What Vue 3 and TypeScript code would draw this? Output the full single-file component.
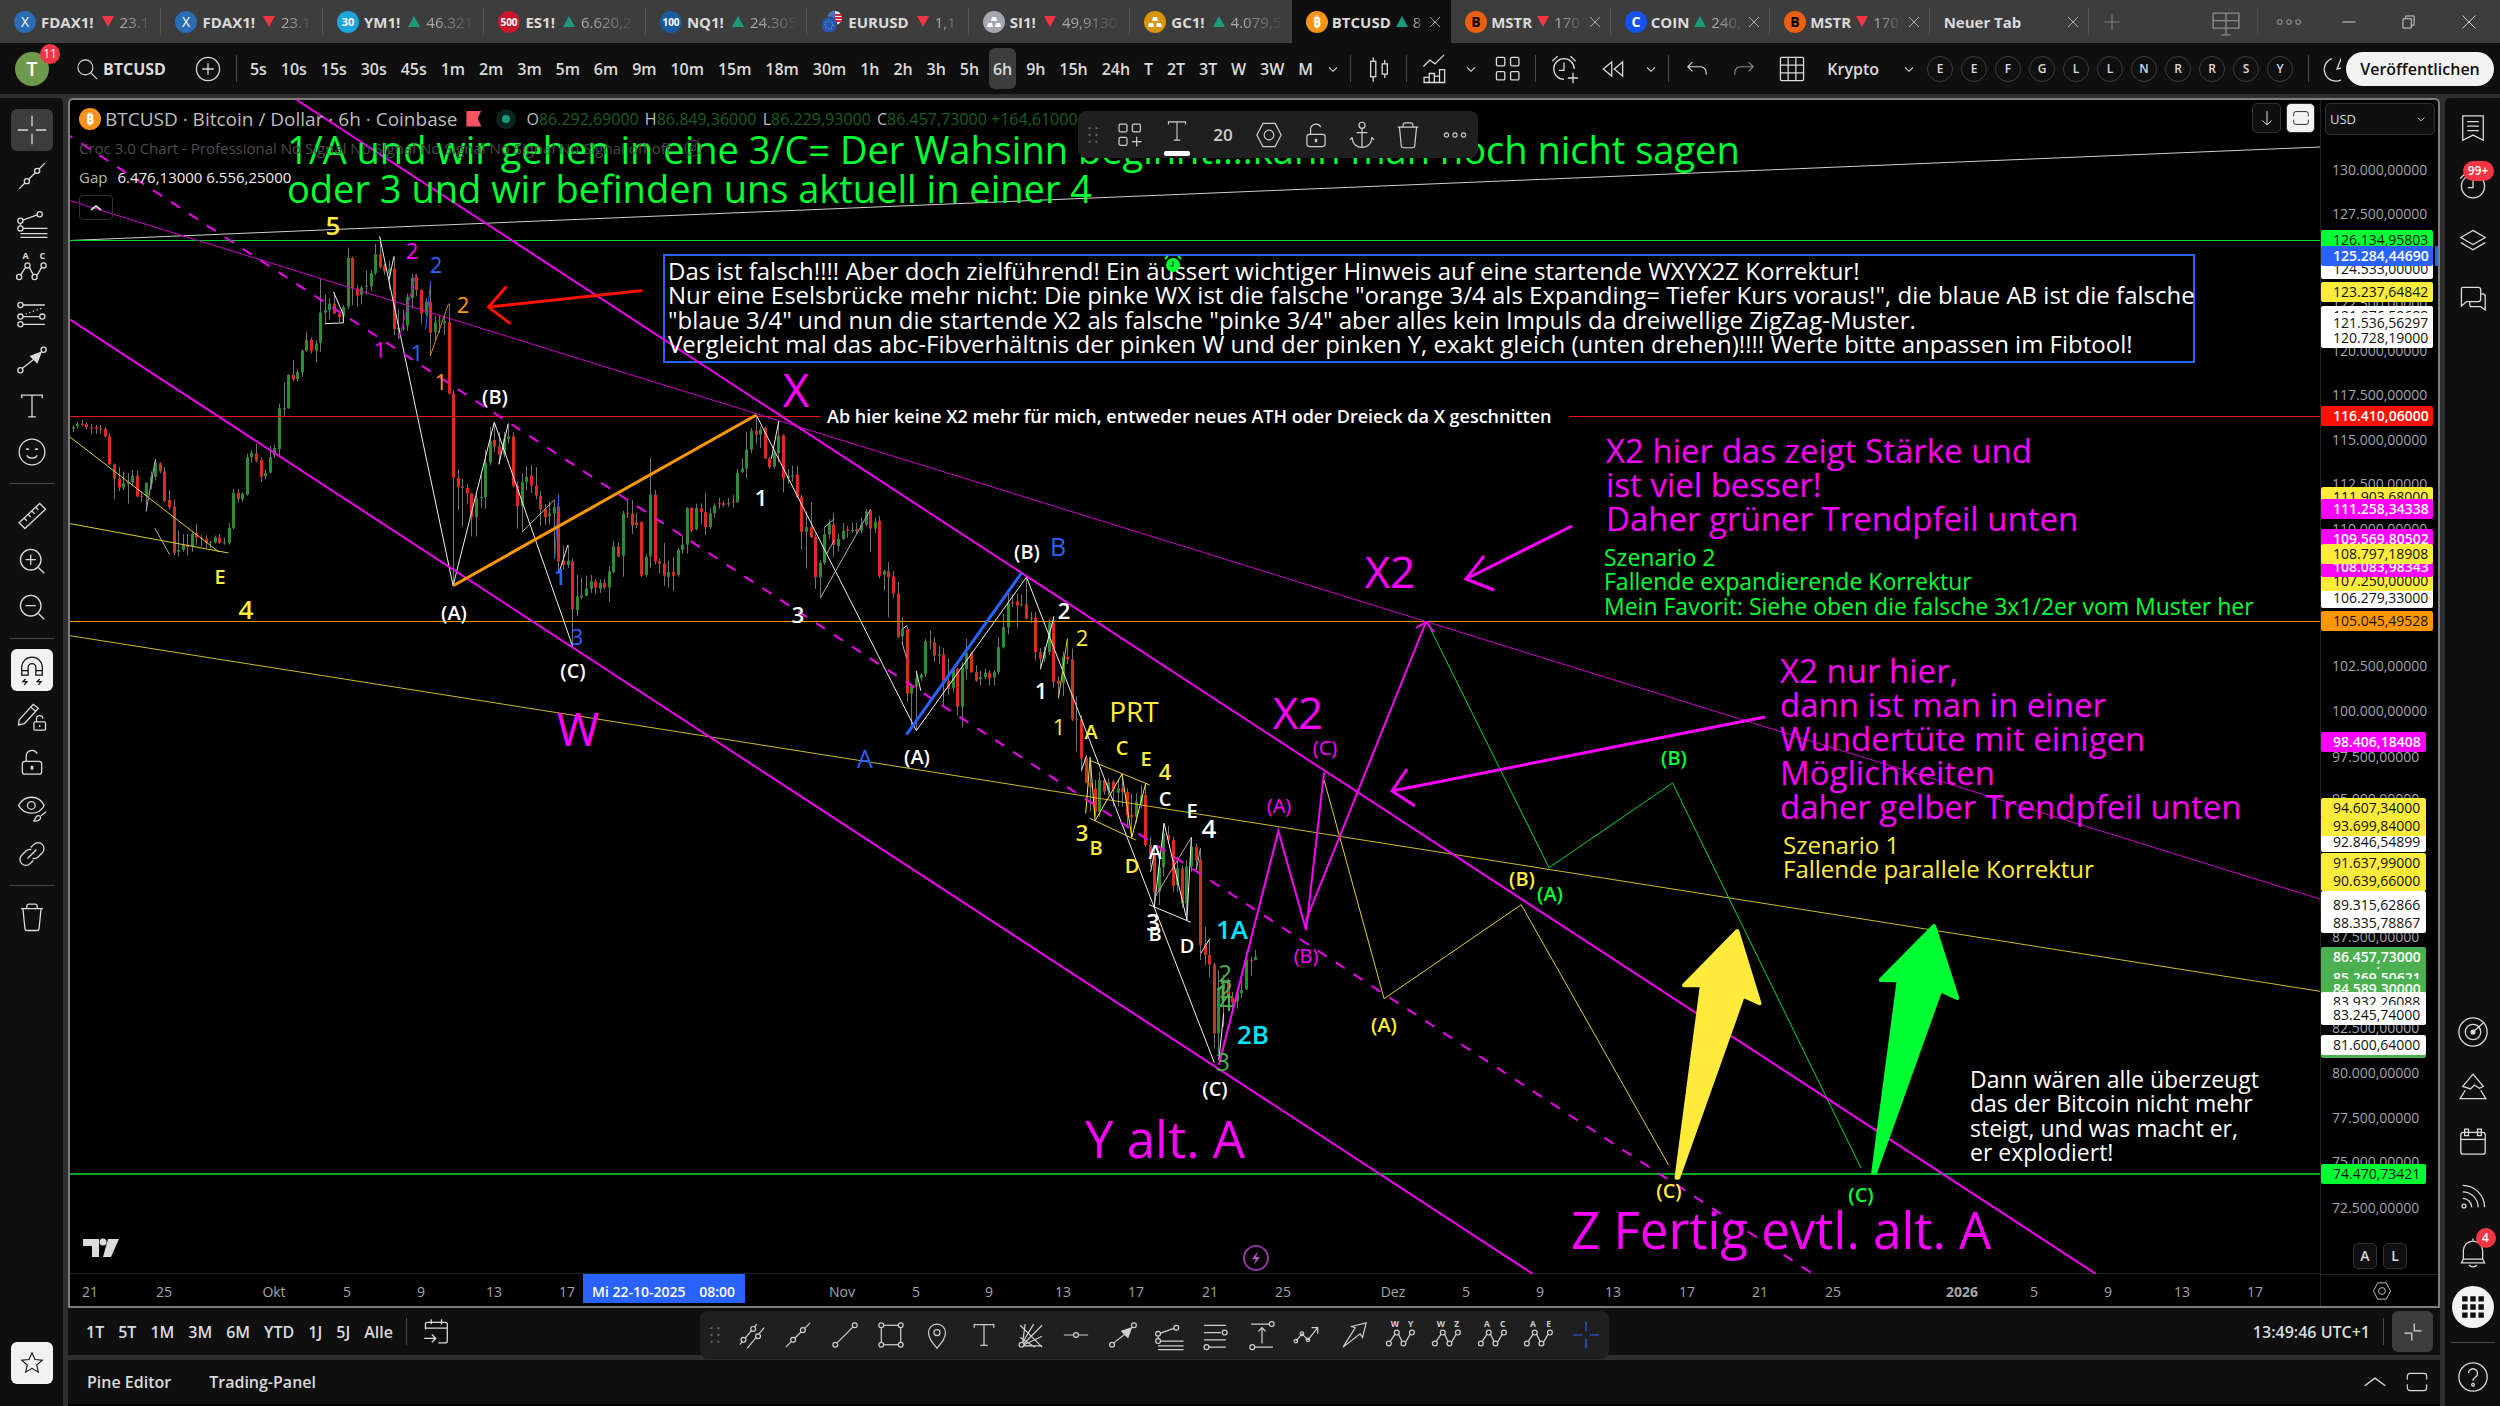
<script setup lang="ts">
import { h } from 'vue'

/* ---------- icon set, drawn on a 28-unit grid ---------- */
const lock = '<rect x="6.5" y="13.5" width="15" height="10" rx="2"/><path d="M9.500 13.500v-4a4.500 4.500 0 0 1 8.500-2"/><path d="M14 17v3" stroke-width="2"/>'
const wave = '<path d="M5 19.500l4-6M12 13.500l3 6M18 19.500l3.500-6"/><circle cx="4" cy="21" r="2"/><circle cx="10.500" cy="12" r="2"/><circle cx="16" cy="21" r="2"/><circle cx="23" cy="12" r="2"/>'
const letters = (a: string, b: string) =>
  `<g stroke="none" fill="currentColor" font-size="7" font-weight="700" text-anchor="middle" font-family="Open Sans, sans-serif"><text x="9" y="7">${a}</text><text x="22" y="7">${b}</text></g>`
const icons: Record<string, string> = {
  cross: '<path d="M14 3v8M14 17v8M3 14h8M17 14h8"/>',
  trend: '<path d="M4 24l4.500-4.500M11.500 16.500l5-5M19.500 8.500l4.500-4.500"/><circle cx="10" cy="18" r="2"/><circle cx="18" cy="10" r="2"/>',
  fib: '<circle cx="5" cy="13" r="2"/><circle cx="20" cy="8" r="2"/><circle cx="5" cy="19" r="2"/><path d="M7 12.500l11-4M5 15v2M7 19h19M5 23h21M5 26h21"/>',
  abc: wave + letters('A', 'C'),
  wy: wave + letters('W', 'Y'),
  wz: wave + letters('W', 'Z'),
  ae: wave + letters('A', 'E'),
  forecast: '<circle cx="5" cy="7" r="2"/><circle cx="5" cy="16" r="2"/><circle cx="22" cy="16" r="2"/><circle cx="5" cy="22" r="2"/><path d="M7 7h17M7 16h13M7 22h17"/><path d="M9 14l14-5" stroke-dasharray="1 2"/>',
  arrow: '<circle cx="5" cy="22" r="2"/><circle cx="23" cy="6" r="2"/><path d="M6.500 20.500L16 13"/><path d="M21 8l-8 3 5 5z" fill="currentColor"/>',
  text: '<path d="M6 8V5.500h16V8M14 5.500v17M11 22.500h6"/>',
  smile: '<circle cx="14" cy="14" r="10"/><path d="M10 16.500c1 3 7 3 8 0"/><path d="M10.500 11v1.500M17.500 11v1.500" stroke-width="2"/>',
  ruler: '<path d="M4 20L20 5l4.500 4.500L8.500 24.500zM8 16.500l2 2M11 13.500l2 2M14 11l2 2M17 8l2 2"/>',
  zin: '<circle cx="13" cy="13" r="8"/><path d="M9 13h8M13 9v8M19 19l4.500 4.500"/>',
  zout: '<circle cx="13" cy="13" r="8"/><path d="M9 13h8M19 19l4.500 4.500"/>',
  magnet: '<path d="M6 18v-6a8 8 0 0 1 16 0v6h-5v-6a3 3 0 0 0-6 0v6zM6 14.500h5M17 14.500h5M9 21l-2 2h3l-2 2.500M20 21l-2 2h3l-2 2.500"/>',
  penlock: '<path d="M4 17L15 5l4 3L8 20l-4.500 1zM13 7l4 3.500"/><rect x="15.500" y="18.500" width="9" height="6.500" rx="1"/><path d="M17.500 18.500v-2a2.500 2.500 0 0 1 5-.5M20 21v1.500"/>',
  lock,
  eye: '<path d="M3.500 12c4.500-8.500 16-8.500 20 0-4 8-15.500 8-20 0z"/><circle cx="13.500" cy="12" r="3"/><path d="M15 24c2 0 1-4 4-4 2 0 2 2 1 3s-3 1.500-5 1zM21 20l4-3"/>',
  hidden: '<circle cx="14" cy="14" r="8"/><circle cx="14" cy="14" r="3"/><path d="M7 24L21 4"/>',
  link: '<path d="M13 9l2.500-2.500a4.500 4.500 0 0 1 6.500 6.500L18.500 16.500a4.500 4.500 0 0 1-4 1M15 19l-2.500 2.500A4.500 4.500 0 0 1 6 15L9.500 11.500a4.500 4.500 0 0 1 4-1M10.500 17.500l7-7"/>',
  trash: '<path d="M5.500 7.500h17M10 7V5.500a1.500 1.500 0 0 1 1.500-1.500h5A1.500 1.500 0 0 1 18 5.500V7M7 8l1.500 15a1.500 1.500 0 0 0 1.500 1.500h8a1.500 1.500 0 0 0 1.500-1.500L21 8"/>',
  star: '<path d="M14 4.500l2.800 6.300 6.800.6-5.200 4.500 1.600 6.700-6-3.600-6 3.600 1.600-6.700-5.200-4.500 6.800-.6z"/>',
  search: '<circle cx="12.500" cy="12.500" r="7"/><path d="M17.500 17.500l6 6"/>',
  plus: '<circle cx="14" cy="14" r="9"/><path d="M14 9.500v9M9.500 14h9"/>',
  chev: '<path d="M10.500 12.500l3.500 3.500 3.500-3.500"/>',
  up: '<path d="M6 17l8-6 8 6"/>',
  candles: '<path d="M9.500 5v3M9.500 20v4M18.500 7v3M18.500 18v3"/><rect x="7.500" y="8" width="4" height="12"/><rect x="16.500" y="10" width="4" height="8"/>',
  indic: '<path d="M5 12l5-5 4 3 7-7M5.500 24.500v-4h4v4zM9.500 24.500v-7h4v7zM13.500 24.500v-5h4v5zM17.500 24.500v-10h4v10z"/>',
  tiles: '<rect x="5" y="5" width="6.500" height="6.500" rx="1"/><rect x="16" y="5" width="6.500" height="6.500" rx="1"/><rect x="5" y="16" width="6.500" height="6.500" rx="1"/><rect x="16" y="16" width="6.500" height="6.500" rx="1"/>',
  tilesadd: '<rect x="5" y="5" width="6.500" height="6.500" rx="1"/><rect x="16" y="5" width="6.500" height="6.500" rx="1"/><rect x="5" y="16" width="6.500" height="6.500" rx="1"/><path d="M19.500 15.500v8M15.500 19.500h8"/>',
  alarm: '<path d="M14 22a8 8 0 1 1 8-8M14 9v6h-4M5 8l4-4M19 4l4 4M21 17v8M17 21h8"/>',
  rewind: '<path d="M13 8.500L6.500 14l6.500 5.500zM21.500 8.500L15 14l6.500 5.500z"/>',
  undo: '<path d="M10 8l-4 4 4 4M6.500 12H17a5 5 0 0 1 5 5v2"/>',
  redo: '<path d="M18 8l4 4-4 4M21.500 12H11a5 5 0 0 0-5 5v2"/>',
  table: '<rect x="5" y="5" width="18" height="18" rx="1"/><path d="M11 5v18M17 5v18M5 11h18M5 17h18"/>',
  gauge: '<path d="M10 6a9 9 0 1 0 8 16M18 4v9l-4 1z"/>',
  monitor: '<path d="M4.500 7.500h19v11h-19zM14 7.500v16M10.500 23.500h7M4.500 13h19"/>',
  more: '<circle cx="6" cy="14" r="2"/><circle cx="14" cy="14" r="2"/><circle cx="22" cy="14" r="2"/>',
  close: '<path d="M7 7l14 14M21 7L7 21"/>',
  minus: '<path d="M7 14h14"/>',
  restore: '<path d="M7.500 10.500h9v10h-9zM10.500 10V7.500h9v10H17"/>',
  add: '<path d="M14 5v18M5 14h18"/>',
  hexa: '<path d="M9 4.500h10l5 9.500-5 9.500H9L4 14z"/><circle cx="14" cy="14" r="4"/>',
  anchor: '<circle cx="14" cy="6" r="2.500"/><path d="M14 8.500V24M9.500 12h9M6 16c0 11 16 11 16 0M6 16l-2 2M22 16l2 2"/>',
  drag: '<g fill="currentColor" stroke="none"><circle cx="11" cy="8" r="1"/><circle cx="17" cy="8" r="1"/><circle cx="11" cy="14" r="1"/><circle cx="17" cy="14" r="1"/><circle cx="11" cy="20" r="1"/><circle cx="17" cy="20" r="1"/></g>',
  down: '<path d="M14 7v14M9.500 16.500L14 21l4.500-4.500"/>',
  fit: '<path d="M5.500 12v-3A2.500 2.500 0 0 1 8 6.500h12A2.500 2.500 0 0 1 22.500 9v3M5.500 16v3A2.500 2.500 0 0 0 8 21.500h12a2.500 2.500 0 0 0 2.500-2.500v-3"/>',
  book: '<path d="M6 4.500h16v19l-8-4-8 4zM9.500 9h9M9.500 12.500h9M9.500 16h9"/>',
  clock: '<circle cx="14" cy="15" r="9"/><path d="M14 10v6h-4M4 9l4-4"/>',
  layers: '<path d="M14 5l9.500 5.500L14 16l-9.500-5.500zM4.500 14.500L14 20l9.500-5.500"/>',
  chat: '<path d="M6 5h12a2 2 0 0 1 2 2v7a2 2 0 0 1-2 2H9l-4 3.500V6a1 1 0 0 1 1-1zM20 10h1.500a2 2 0 0 1 2 2v10.500L20 20h-7a1.500 1.500 0 0 1-1.500-1.500V16"/>',
  radar: '<circle cx="14" cy="14" r="11"/><circle cx="14" cy="14" r="6"/><circle cx="14" cy="14" r="1.500" fill="currentColor"/><path d="M15 13l7-6"/>',
  idea: '<path d="M14 4l8 9.500-3 1.500-4-2.500-3 3-6-2zM8 16.500L4 23h20l-4-6.500"/>',
  cal: '<rect x="4.500" y="6.500" width="19" height="17" rx="2"/><path d="M4.500 12h19"/><rect x="7.500" y="4" width="3" height="5"/><rect x="17.500" y="4" width="3" height="5"/>',
  feed: '<circle cx="7" cy="21" r="1.500"/><path d="M6 15a7 7 0 0 1 7 7M6 10a12 12 0 0 1 12 12M6 5a17 17 0 0 1 17 17"/>',
  bell: '<path d="M6.500 20V13a7.500 7.500 0 0 1 15 0v7M5 22.500h18l-1.500-3h-15zM11 24c1 2 5 2 6 0M14 5V3.500"/>',
  dots9: '<g fill="currentColor" stroke="none"><path d="M6 6h4v4H6zM12 6h4v4h-4zM18 6h4v4h-4zM6 12h4v4H6zM12 12h4v4h-4zM18 12h4v4h-4zM6 18h4v4H6zM12 18h4v4h-4zM18 18h4v4h-4z"/></g>',
  help: '<circle cx="14" cy="14" r="11"/><path d="M10.500 11a3.500 3.500 0 1 1 5.500 3c-1.500 1-2 1.500-2 3"/><circle cx="14" cy="20" r="1"/>',
  goto: '<path d="M5 12V8a1.500 1.500 0 0 1 1.500-1.500h14A1.500 1.500 0 0 1 22 8v13a1.500 1.500 0 0 1-1.500 1.500H15M5 11h17M9.500 4v4M17.500 4v4M4 19h9M10 16l3 3-3 3"/>',
  chan: '<path d="M4 22L18 5M10 25L24 8"/><circle cx="7" cy="18" r="2" fill="#1f1f1f"/><circle cx="15" cy="9" r="2" fill="#1f1f1f"/><circle cx="19" cy="15" r="2" fill="#1f1f1f"/>',
  seg: '<circle cx="6" cy="22" r="2"/><circle cx="22" cy="6" r="2"/><path d="M7.500 20.500l13-13"/>',
  rect: '<rect x="6" y="6" width="16" height="16"/><g fill="#1f1f1f"><circle cx="6" cy="6" r="2"/><circle cx="22" cy="6" r="2"/><circle cx="6" cy="22" r="2"/><circle cx="22" cy="22" r="2"/></g>',
  pin: '<path d="M14 25c-4-5-7-8.500-7-13a7 7 0 0 1 14 0c0 4.500-3 8-7 13z"/><circle cx="14" cy="12" r="2.500"/>',
  gann: '<circle cx="7" cy="22" r="2"/><path d="M8 20L10 5M8 20L17 5M9 21L24 6M9 22l15-7M9 23h15M6 6l18 18M6 16l12 8"/>',
  hline: '<path d="M4 14h7.500M16.500 14H24"/><circle cx="14" cy="14" r="2"/>',
  levels: '<path d="M5 6h18M5 12h14M5 18h18M9 24h14"/><circle cx="22" cy="12" r="2"/><circle cx="7" cy="24" r="2"/>',
  range: '<path d="M5 5h15M8 24h15M14 21V8M11 11l3-3 3 3"/><circle cx="22" cy="5" r="2"/><circle cx="6" cy="24" r="2"/>',
  path: '<path d="M4 19l5-6 5 5 8-10M17 8h5v5"/><circle cx="4" cy="19" r="1.500"/><circle cx="9" cy="13" r="1.500"/><circle cx="14" cy="18" r="1.500"/>',
  bigarrow: '<path d="M5 24L15 8l-3-1 12-3-3 12-2-3z"/>',
  shrink: '<path d="M15 7v6h6M13 21v-6H7"/>',
}
const Icon = (p: { n: string; s?: number }) =>
  h('svg', {
    class: 'ic', viewBox: '0 0 28 28', width: p.s ?? 36, height: p.s ?? 36,
    fill: 'none', stroke: 'currentColor', 'aria-hidden': 'true', innerHTML: icons[p.n],
  })

/* ---------- window tabs ---------- */
interface Tab { t: string; d: 1 | -1 | 0; v: string; c: string; g: string; x?: boolean; on?: boolean; gc?: string }
const tabs: Tab[] = [
  { t: 'FDAX1!', d: -1, v: '23.1', c: '#2b6cb5', g: 'X' },
  { t: 'FDAX1!', d: -1, v: '23.1', c: '#2b6cb5', g: 'X' },
  { t: 'YM1!', d: 1, v: '46.321', c: '#1ea4dd', g: '30' },
  { t: 'ES1!', d: 1, v: '6.620,2', c: '#c9162b', g: '500' },
  { t: 'NQ1!', d: 1, v: '24.305', c: '#1a5a9e', g: '100' },
  { t: 'EURUSD', d: -1, v: '1,1', c: '', g: 'fx' },
  { t: 'SI1!', d: -1, v: '49,9130', c: '#a6a8b1', g: 'bars' },
  { t: 'GC1!', d: 1, v: '4.079,5', c: '#d8950e', g: 'bars' },
  { t: 'BTCUSD', d: 1, v: '8', c: '#f7931a', g: '₿', x: true, on: true },
  { t: 'MSTR', d: -1, v: '170', c: '#eb5f12', g: 'B', gc: '#000', x: true },
  { t: 'COIN', d: 1, v: '240,', c: '#1652f0', g: 'C', x: true },
  { t: 'MSTR', d: -1, v: '170', c: '#eb5f12', g: 'B', gc: '#000', x: true },
  { t: 'Neuer Tab', d: 0, v: '', c: '', g: '', x: true },
]

const intervals = '5s 10s 15s 30s 45s 1m 2m 3m 5m 6m 9m 10m 15m 18m 30m 1h 2h 3h 5h 6h 9h 15h 24h T 2T 3T W 3W M'.split(' ')
const watch = 'EEFGLLNRRSY'.split('')
const leftTools = [
  ['cross', 'trend', 'fib', 'abc', 'forecast', 'arrow', 'text', 'smile'],
  ['ruler', 'zin', 'zout'],
  ['magnet', 'penlock', 'lock', 'eye', 'link'],
  ['trash'],
]
const ranges = '1T 5T 1M 3M 6M YTD 1J 5J Alle'.split(' ')
const drawTools = ['chan', 'trend', 'seg', 'rect', 'pin', 'text', 'gann', 'hline', 'arrow', 'fib', 'levels', 'range', 'path', 'bigarrow', 'wy', 'wz', 'abc', 'ae', 'cross']

/* ---------- bars: open, close, high, low; measured downwards inside each block ---------- */
const blocks: { top: number; k: number; bars: string }[] = [
  { top: 200, k: 2.8, bars: '640 636 630 650|633 627 622 640|626 630 616 632|628 637 622 642|637 640 628 654|636 640 630 655|640 641 630 655|641 662 635 665|662 740 653 742|740 780 738 838|780 805 748 815|805 793 760 812|795 790 765 850|790 772 756 800|772 830 758 832|828 830 815 845|828 792 790 872|795 775 760 810|775 735 728 785|737 760 735 765|760 842 748 847|840 860 812 866|858 988 838 995|985 980 925 998|980 965 935 985|965 972 935 995|970 935 930 985|932 945 907 965|945 946 938 970|948 960 940 975|960 958 955 975|958 945 940 962|945 960 935 962|960 958 945 965|960 918 905 965|918 820 808 922|820 837 810 847|838 822 818 845|825 720 710 828|720 708 700 735|710 730 682 735|728 775 720 790|773 765 755 782|763 720 688 765|715 695 685 722|697 583 570 720|585 583 510 605|583 490 488 585|490 502 448 507|502 482 475 508|482 422 418 495|422 392 368 425|392 422 385 430|422 402 392 455|400 315 220 425|315 308 265 348|308 290 275 335|290 318 258 320|318 328 310 342|325 300 295 345|298 162 133 305|162 248 158 295|248 268 238 300|265 245 240 292|243 240 198 265|242 205 195 255|205 152 122 210|152 188 105 192|185 200 178 210|205 192 170 250|192 362 158 378|362 358 305 388|360 358 308 366|352 272 262 366|275 218 207 305|216 252 207 270|252 318 250 348|318 285 275 325|285 372 228 435|370 342 325 392|340 338 325 372|345 340 325 378|342 542 290 545|542 778 532 1075|778 804 755 868|802 806 780 915|806 822 795 850|822 888 820 942|888 835 825 942|835 832 770 862|832 735 700 865|735 675 635 742|672 690 622 705|690 712 650 740|712 668 650 720|670 662 625 682|662 800 650 805|800 858 788 920|858 790 765 930|790 775 745 812|772 800 742 820|800 828 748 838|828 866 815 912|866 888 852 910|885 878 845 908|878 860 840 1002|858 1012 825 1045|1010 1022 968 1035|1022 1010 966 1030|1012 1146 1005 1250|1148 1110 1050 1165|1112 1108 1058 1118|1108 1088 1052 1110|1088 1068 1050 1100|1068 1085 1062 1102|1088 1072 1062 1100|1072 1085 1060 1090|1085 1040 1025 1125|1042 970 955 1045|970 998 958 1000|996 878 870 1055|876 878 838 890|878 912 840 935|902 910 875 918|902 1052 900 1055|1050 1000 992 1055|998 825 722 1030|825 1012 812 1020|1012 1018 1005 1045|1018 1052 960 1080|1055 1042 1010 1085|1042 1052 1000 1095|1050 980 975 1055|980 965 940 990|965 862 860 990|862 925 860 930|922 862 850 925' },
  { top: 230, k: 2.8, bars: '780 790 765 825|790 832 735 855|832 793 780 838|793 772 765 805|765 768 750 780|765 770 760 775|768 765 750 775|760 762 742 778|762 680 668 765|678 668 640 680|668 615 565 695|615 562 555 625|562 573 518 600|573 558 550 610|555 640 550 640|640 664 635 668|662 625 620 668|625 576 537 650|575 695 572 735|695 690 670 710|690 686 660 705|685 748 660 750|748 845 742 895|845 832 788 948|832 860 762 862|860 972 850 1005|972 932 925 1030|932 852 830 938|852 822 810 865|825 882 792 915|885 865 850 900|865 842 820 868|838 842 828 862|842 840 820 848|838 842 820 850|842 825 805 850|825 788 782 830|785 836 782 902|836 818 805 848|815 968 800 975|965 955 950 1010|955 972 930 1085|970 1018 955 1030|1018 1140 985 1142|1138 1118 1085 1160|1118 1298 1110 1320|1298 1278 1270 1390|1278 1255 1235 1400|1255 1245 1240 1262|1243 1152 1145 1252|1152 1155 1122 1175|1155 1192 1140 1210|1192 1188 1165 1215|1188 1262 1170 1335|1262 1285 1200 1300|1282 1230 1225 1295|1228 1335 1225 1360|1335 1225 1210 1392|1230 1185 1145 1258|1185 1238 1180 1240|1238 1262 1218 1265|1258 1252 1235 1275|1252 1240 1228 1258|1240 1255 1232 1275|1253 1238 1232 1275|1238 1168 1140 1245|1168 1112 1075 1172|1112 1045 1010 1132|1042 1045 1020 1055|1040 1052 1018 1115|1050 1048 1020 1055|1048 1088 975 1090|1088 1085 1070 1100|1085 1182 1070 1205|1182 1200 1170 1225|1200 1182 1165 1210|1182 1100 1088 1190|1098 1265 1082 1282|1262 1270 1250 1305|1268 1195 1180 1305|1195 1202 1145 1215|1202 1370 1172 1375|1370 1372 1305 1460' },
  { top: 700, k: 3, bars: '58 175 45 215|175 248 165 250|248 262 180 335|265 335 240 350|335 240 215 350|240 275 235 285|272 248 235 285|245 268 240 320|278 265 240 320|265 276 225 320|276 345 265 385|345 352 280 415|350 305 280 370|310 285 255 325|285 435 250 440|435 465 410 500|465 575 440 625|575 502 470 615|502 400 370 530|405 420 378 430|420 558 410 575|555 505 470 575|505 610 495 625|610 500 480 660|500 440 412 515|440 480 430 510|478 735 445 780|732 765 680 795|765 793 718 832|793 1000 788 1045|1000 865 810 1060|865 850 825 980|845 892 835 930|893 908 875 940|905 875 865 925|880 870 840 895|868 780 755 870|780 781 770 828|780 770 750 780' },
]
const candles = blocks
  .flatMap((b) => b.bars.split('|').map((s) => s.split(' ').map((n) => b.top + Number(n) / b.k)))
  .map(([o, c, hi, lo], i) => ({
    x: Math.round(72.7 + i * 4.583), hi, lo, y: Math.min(o, c), hgt: Math.max(1, Math.abs(c - o)), up: c < o,
  }))

/* ---------- drawings ---------- */
const boxA = [60, 200, 2.45, 2.8]
const boxB = [640, 230, 2.45, 2.8]
const boxC = [1000, 700, 2.45, 3]
const boxD = [1600, 830, 2.119, 3]
const pt = (b: number[], s: string) =>
  s.split(' ').map((q) => {
    const [x, y] = q.split(',').map(Number)
    return `${(b[0] + x / b[2]).toFixed(1)},${(b[1] + y / b[3]).toFixed(1)}`
  }).join(' ')

const W = '#f0f0f0', G = '#b0b0b0', Y = '#ffeb3b', YD = '#e0cc34', M = '#ff00ff', M2 = '#f000f0', B = '#2962ff', O = '#ff9800', GR = '#00ff33'
const lines: { p: string; c: string; w: number; dash?: boolean }[] = [
  { p: '70,240.500 2320,147', c: '#d0d0d0', w: 1 },
  { p: '70,240.500 2320,240.500', c: '#00d62c', w: 1 },
  { p: '70,416.500 820,416.500', c: '#f01010', w: 1 },
  { p: '1569,416.500 2320,416.500', c: '#f01010', w: 1 },
  { p: '70,621.500 2320,621.500', c: O, w: 1 },
  { p: '70,1174 2320,1174', c: '#00a324', w: 2 },
  { p: '70,635.700 2320,991.300', c: '#ccb830', w: 1 },
  { p: '70,200.700 2320,899', c: '#c800c8', w: 1 },
  { p: '70,437 219,552', c: YD, w: 1 },
  { p: '70,523.600 228.600,553', c: YD, w: 1 },
  { p: pt(boxA, '211,872 234,725'), c: G, w: 1 },
  { p: pt(boxA, '232,918 268,992'), c: G, w: 1 },
  { p: pt(boxA, '694,320 694,344 650,346'), c: W, w: 1 },
  { p: pt(boxA, '670,258 694,320'), c: W, w: 1 },
  { p: pt(boxA, '783,102 963,1080 1064,622 1256,1250'), c: W, w: 1 },
  { p: pt(boxA, '818,158 807,220'), c: W, w: 1 },
  { p: pt(boxA, '1075,740 1098,626'), c: W, w: 1 },
  { p: pt(boxA, '1132,930 1211,840'), c: G, w: 1 },
  { p: pt(boxA, '1222,1045 1244,966'), c: W, w: 1 },
  { p: pt(boxA, '831,388 872,207'), c: '#c800c8', w: 1 },
  { p: pt(boxA, '896,362 908,228'), c: B, w: 1 },
  { p: pt(boxA, '907,437 952,290'), c: '#d88400', w: 1 },
  { p: pt(boxA, '1222,825 1212,1005'), c: B, w: 1 },
  { p: pt(boxB, '285,518 677,1402 947,972') + ' ' + pt(boxC, '525,1088'), c: W, w: 1 },
  { p: pt(boxB, '322,640 340,535'), c: W, w: 1 },
  { p: pt(boxB, '442,1030 565,782'), c: G, w: 1 },
  { p: pt(boxB, '453,832 476,808'), c: G, w: 1 },
  { p: pt(boxB, '457,908 476,868'), c: G, w: 1 },
  { p: pt(boxB, '644,1116 655,1107'), c: W, w: 1 },
  { p: pt(boxB, '642,1155 653,1198'), c: G, w: 1 },
  { p: pt(boxB, '677,1235 688,1290'), c: W, w: 1 },
  { p: pt(boxB, '981,1230 1014,1082'), c: W, w: 1 },
  { p: pt(boxB, '1025,1312 1047,1145'), c: YD, w: 1 },
  { p: pt(boxC, '200,210 211,170'), c: W, w: 1 },
  { p: pt(boxC, '222,182 367,255'), c: YD, w: 1 },
  { p: pt(boxC, '220,355 333,420'), c: YD, w: 1 },
  { p: pt(boxC, '210,340 221,172 233,362 299,222 323,412 357,250'), c: Y, w: 1 },
  { p: pt(boxC, '369,515 378,460'), c: W, w: 1 },
  { p: pt(boxC, '378,620 402,370 458,660 469,412'), c: W, w: 1 },
  { p: pt(boxC, '378,595 469,412'), c: G, w: 1 },
  { p: pt(boxC, '365,614 468,667'), c: W, w: 1 },
  { p: pt(boxC, '481,510 491,445'), c: G, w: 1 },
  { p: pt(boxC, '492,760 514,716'), c: W, w: 1 },
  { p: pt(boxC, '536,1080 548,940'), c: W, w: 1 },
  { p: pt(boxC, '794,240 941,896 1277,614') + ' ' + pt(boxD, '145,1004'), c: YD, w: 1 },
  { p: '1427,622 1549,867.700 1672.500,783 1861,1168', c: '#00d630', w: 1 },
  { p: '70,136 1813,1274', c: M2, w: 2, dash: true },
  { p: '296.800,100 2096,1274', c: M2, w: 2 },
  { p: '70,319.600 1533,1274', c: M2, w: 2 },
  { p: pt(boxA, '963,1080') + ' ' + pt(boxB, '285,518'), c: O, w: 3 },
  { p: pt(boxB, '653,1413 935,960'), c: B, w: 3 },
  { p: pt(boxC, '536,1095 682,393 750,690 794,217'), c: M, w: 2 },
  { p: pt(boxC, '750,660') + ' 1426,622', c: M, w: 2 },
  { p: '1416,628 1426,622 1434,632', c: M, w: 2 },
  { p: pt(boxA, '1427,253 1050,300'), c: '#ff1100', w: 3 },
  { p: pt(boxA, '1094,242 1050,300 1104,347'), c: '#ff1100', w: 3 },
  { p: '1572,526 1466,579', c: M, w: 3 },
  { p: '1484,556 1466,579 1494,590', c: M, w: 3 },
  { p: '1765,717 1392,791', c: M, w: 3 },
  { p: '1407,769 1392,791 1415,806', c: M, w: 3 },
]
const bigArrows = [
  { p: pt(boxD, '291,303 338,520 303,497 166,1043 162,1043 216,466 178,466'), c: Y },
  { p: pt(boxD, '708,288 757,504 721,481 583,1028 579,1028 633,451 595,450'), c: GR },
]

/* multi-line notes: x, first baseline, line step, size, weight */
const notes = [
  { x: 287, y: 164, d: 39, s: 38, w: 400, c: GR, t: ['1/A und wir gehen in eine 3/C= Der Wahsinn beginnt....kann man noch nicht sagen', 'oder 3 und wir befinden uns aktuell in einer 4'] },
  { x: 668, y: 280, d: 24.4, s: 24, w: 400, c: '#fff', t: ['Das ist falsch!!!! Aber doch zielführend! Ein äussert wichtiger Hinweis auf eine startende WXYX2Z Korrektur!', 'Nur eine Eselsbrücke mehr nicht: Die pinke WX ist die falsche "orange 3/4 als Expanding= Tiefer Kurs voraus!", die blaue AB ist die falsche', '"blaue 3/4" und nun die startende X2 als falsche "pinke 3/4" aber alles kein Impuls da dreiwellige ZigZag-Muster.', 'Vergleicht mal das abc-Fibverhältnis der pinken W und der pinken Y, exakt gleich (unten drehen)!!!! Werte bitte anpassen im Fibtool!'] },
  { x: 827, y: 423, d: 0, s: 18, w: 600, c: '#fff', t: ['Ab hier keine X2 mehr für mich, entweder neues ATH oder Dreieck da X geschnitten'] },
  { x: 1606, y: 463, d: 34, s: 33, w: 400, c: M, t: ['X2 hier das zeigt Stärke und', 'ist viel besser!', 'Daher grüner Trendpfeil unten'] },
  { x: 1604, y: 566, d: 24.4, s: 23, w: 400, c: GR, t: ['Szenario 2', 'Fallende expandierende Korrektur', 'Mein Favorit: Siehe oben die falsche 3x1/2er vom Muster her'] },
  { x: 1780, y: 683, d: 34, s: 33, w: 400, c: M, t: ['X2 nur hier,', 'dann ist man in einer', 'Wundertüte mit einigen', 'Möglichkeiten', 'daher gelber Trendpfeil unten'] },
  { x: 1783, y: 854, d: 24.4, s: 24, w: 400, c: Y, t: ['Szenario 1', 'Fallende parallele Korrektur'] },
  { x: 1970, y: 1088, d: 24.4, s: 23, w: 400, c: '#fff', t: ['Dann wären alle überzeugt', 'das der Bitcoin nicht mehr', 'steigt, und was macht er,', 'er explodiert!'] },
  { x: 1571, y: 1249, d: 0, s: 51, w: 400, c: M, t: ['Z Fertig evtl. alt. A'] },
  { x: 1085, y: 1158, d: 0, s: 51, w: 400, c: M, t: ['Y alt. A'] },
]

/* wave labels: text, centre x, baseline, size, colour, weight */
type L = [string, number, number, number, string, number]
const marks: L[] = [
  ['X2', 1298, 729, 44, M, 400], ['X2', 1390, 588, 44, M, 400], ['X', 796, 407, 46, M, 400], ['W', 578, 746, 46, M, 400],
  ['5', 333, 235, 26, Y, 600], ['2', 412, 259, 22, M, 400], ['2', 436, 273, 22, B, 400], ['1', 380, 358, 22, M, 400],
  ['1', 417, 361, 22, B, 400], ['2', 463, 313, 22, O, 400], ['1', 441, 390, 22, O, 400], ['(B)', 495, 404, 20, '#fff', 600],
  ['(A)', 454, 620, 20, '#fff', 600], ['(C)', 573, 678, 20, '#fff', 600], ['1', 560, 585, 22, B, 600], ['3', 577, 645, 22, B, 400],
  ['E', 220, 584, 20, Y, 600], ['4', 246, 619, 26, Y, 600], ['1', 761, 506, 22, '#fff', 600], ['3', 798, 623, 22, '#fff', 600],
  ['(A)', 917, 764, 20, '#fff', 600], ['A', 865, 768, 25, B, 400], ['(B)', 1027, 559, 20, '#fff', 600], ['B', 1058, 556, 25, B, 400],
  ['2', 1064, 619, 22, '#fff', 600], ['2', 1082, 646, 22, Y, 400], ['1', 1041, 699, 22, '#fff', 600], ['1', 1059, 735, 22, Y, 400],
  ['PRT', 1134, 722, 28, Y, 400], ['A', 1091, 739, 20, Y, 600], ['C', 1122, 755, 20, Y, 600], ['E', 1146, 766, 20, Y, 600],
  ['4', 1165, 780, 22, Y, 600], ['3', 1082, 841, 22, Y, 600], ['B', 1096, 855, 20, Y, 600], ['D', 1132, 873, 20, Y, 600],
  ['C', 1165, 806, 20, '#fff', 600], ['E', 1192, 818, 20, '#fff', 600], ['4', 1209, 838, 26, '#fff', 600], ['A', 1155, 859, 20, '#fff', 600],
  ['3', 1153, 931, 24, '#fff', 600], ['B', 1155, 941, 20, '#fff', 600], ['D', 1187, 953, 20, '#fff', 600],
  ['1A', 1232, 939, 26, '#00e5ff', 600], ['2B', 1253, 1044, 26, '#00e5ff', 600], ['2', 1225, 982, 24, '#4caf50', 400],
  ['1', 1222, 1002, 24, '#4caf50', 600], ['2', 1226, 998, 24, '#4caf50', 400], ['4', 1226, 1011, 24, '#4caf50', 400], ['3', 1223, 1071, 25, '#4caf50', 400], ['(C)', 1215, 1096, 20, '#fff', 600],
  ['(A)', 1279, 813, 20, M, 400], ['(B)', 1306, 963, 20, M, 400], ['(C)', 1325, 755, 20, M, 400], ['(A)', 1384, 1032, 20, Y, 600],
  ['(B)', 1522, 886, 20, Y, 600], ['(A)', 1550, 901, 20, GR, 600], ['(B)', 1674, 765, 20, GR, 600], ['(C)', 1669, 1198, 20, Y, 600], ['(C)', 1861, 1202, 20, GR, 600],
]

/* ---------- price scale, painted back to front ---------- */
const ticks: [string, number][] = [
  ['130.000', 170], ['127.500', 214], ['122.500', 304], ['120.000', 351], ['117.500', 395], ['115.000', 440], ['112.500', 484], ['110.000', 529],
  ['102.500', 666], ['100.000', 711], ['97.500', 757], ['95.000', 799], ['87.500', 937], ['82.500', 1028], ['80.000', 1073], ['77.500', 1118], ['75.000', 1162], ['72.500', 1208],
]
const K = '#111', F = '#fff'
const tags: [string, number, string, string][] = [
  ['126.134,95803', 240, GR, K], ['124.533,00000', 269, F, K], ['125.284,44690', 256, B, F], ['123.237,64842', 292, Y, K],
  ['121.976,59688', 316, F, K], ['120.728,19000', 338, F, K], ['121.536,56297', 323, F, K], ['116.410,06000', 416, '#ff1100', F],
  ['111.903,68000', 497, Y, K], ['111.258,34338', 509, M, F], ['106.279,33000', 598, F, K], ['107.250,00000', 581, Y, K],
  ['109.569,80502', 539, M, F], ['108.083,98343', 567, M, F], ['108.797,18908', 554, Y, K], ['105.045,49528', 621, O, K],
  ['98.406,18408', 742, M, F], ['94.607,34000', 808, Y, K], ['92.846,54899', 842, F, K], ['93.699,84000', 826, Y, K], ['90.639,66000', 881, Y, K], ['91.637,99000', 863, Y, K],
  ['88.335,78867', 923, F, K], ['89.952,54210', 901, F, K], ['89.315,62866', 905, F, K], ['85.269,50621', 978, '#4caf50', F], ['85.836,42190', 962, '#4caf50', F],
  ['86.457,73000', 957, '#4caf50', F], ['84.589,30000', 989, '#4caf50', F], ['83.932,26088', 1002, F, K], ['83.245,74000', 1015, F, K],
  ['81.412,00000', 1048, '#4caf50', F], ['81.600,64000', 1045, F, K], ['74.470,73421', 1174, GR, K],
]
const dates: [string, number][] = [
  ['21', 90], ['25', 164], ['Okt', 274], ['5', 347], ['9', 421], ['13', 494], ['17', 567], ['Nov', 842], ['5', 916], ['9', 989], ['13', 1063],
  ['17', 1136], ['21', 1210], ['25', 1283], ['Dez', 1393], ['5', 1466], ['9', 1540], ['13', 1613], ['17', 1687], ['21', 1760], ['25', 1833],
  ['2026', 1962], ['5', 2034], ['9', 2108], ['13', 2182], ['17', 2255],
]
</script>

<template>
  <div class="app">
    <header class="tabs">
      <nav class="tablist" aria-label="Tabs">
        <div v-for="(t, i) in tabs" :key="i" class="tab" :class="{ on: t.on, before: i === 7, closable: t.x }">
          <svg v-if="t.g" class="coin" viewBox="0 0 22 22" width="22" height="22" aria-hidden="true">
            <template v-if="t.g === 'fx'">
              <circle cx="14" cy="7" r="7" fill="#e9e9ee" /><path d="M10 4h11M10 7h11M10 10h11" stroke="#d3263c" stroke-width="2" /><path d="M14 0a7 7 0 0 0-7 7h7z" fill="#3c6fd0" />
              <circle cx="8" cy="14" r="8" fill="#2458b8" stroke="#3d3d3d" /><circle cx="8" cy="14" r="4" fill="none" stroke="#e6c52c" stroke-dasharray="1 2" />
            </template>
            <template v-else>
              <circle cx="11" cy="11" r="11" :fill="t.c" />
              <path v-if="t.g === 'bars'" d="M8 10l1-4h4l1 4zM4 16l1-4h4l1 4zM12 16l1-4h4l1 4z" fill="#fff" />
              <text v-else x="11" :y="t.g.length > 1 ? 15 : 16" text-anchor="middle" :font-size="t.g.length > 2 ? 10 : t.g.length > 1 ? 11 : 14" :font-weight="t.g === 'X' ? 400 : 700" :fill="t.gc ?? '#fff'">{{ t.g }}</text>
            </template>
          </svg>
          <a href="#" class="tname">{{ t.t }}</a>
          <i v-if="t.d" :class="t.d > 0 ? 'tri up' : 'tri dn'"></i>
          <span class="tval">{{ t.v }}</span>
          <button v-if="t.x" class="bare" aria-label="Schließen"><Icon n="close" :s="20" /></button>
        </div>
      </nav>
      <div class="winbar">
        <button class="w46 dim" aria-label="Neuer Tab"><Icon n="add" :s="24" /></button>
        <span class="grow"></span>
        <button class="w46 dim" aria-label="Monitore"><Icon n="monitor" :s="38" /></button>
        <span class="vsep"></span>
        <button class="w60 dim" aria-label="Mehr"><Icon n="more" :s="32" /></button>
        <button class="w60" aria-label="Minimieren"><Icon n="minus" :s="26" /></button>
        <button class="w60" aria-label="Verkleinern"><Icon n="restore" :s="26" /></button>
        <button class="w60" aria-label="Fenster schließen"><Icon n="close" :s="26" /></button>
      </div>
    </header>

    <div class="toolbar">
      <button class="avatar" aria-label="Profil">T<span class="badge">11</span></button>
      <button class="bare sym"><Icon n="search" :s="30" />BTCUSD</button>
      <button class="bare plus" aria-label="Vergleichen"><Icon n="plus" /></button>
      <span class="vsep"></span>
      <div class="intervals">
        <button v-for="t in intervals" :key="t" class="bare iv" :class="{ sel: t === '6h' }">{{ t }}</button>
        <button class="bare ivmore" aria-label="Intervalle"><Icon n="chev" :s="32" /></button>
      </div>
      <span class="vsep"></span>
      <button class="bare w54" aria-label="Kerzen"><Icon n="candles" /></button>
      <span class="vsep"></span>
      <button class="bare w54" aria-label="Indikatoren"><Icon n="indic" /></button>
      <button class="bare w20" aria-label="Favoriten"><Icon n="chev" :s="32" /></button>
      <button class="bare w54" aria-label="Vorlagen"><Icon n="tiles" /></button>
      <span class="vsep"></span>
      <button class="bare w54" aria-label="Alarm"><Icon n="alarm" /></button>
      <button class="bare w42" aria-label="Replay"><Icon n="rewind" /></button>
      <button class="bare w32" aria-label="Replay-Menü"><Icon n="chev" :s="32" /></button>
      <span class="vsep"></span>
      <button class="bare w54" aria-label="Zurück"><Icon n="undo" :s="32" /></button>
      <button class="bare w38 dim" aria-label="Wiederholen"><Icon n="redo" :s="32" /></button>
      <button class="bare w54" aria-label="Layout"><Icon n="table" /></button>
      <button class="bare layout">Krypto<Icon n="chev" :s="32" /></button>
      <div class="letters"><button v-for="(c, i) in watch" :key="i">{{ c }}</button></div>
      <span class="vsep"></span>
      <button class="bare clip" aria-label="Tempo"><Icon n="gauge" /></button>
      <button class="publish">Veröffentlichen</button>
    </div>

    <div class="main">
      <aside class="rail left">
        <template v-for="(g, gi) in leftTools" :key="gi">
          <hr v-if="gi" />
          <button v-for="t in g" :key="t" class="tool" :class="{ sel: t === 'cross', white: t === 'magnet' }" :aria-label="t"><Icon :n="t" /></button>
        </template>
        <button class="tool white last" aria-label="Favoriten"><Icon n="star" :s="30" /></button>
      </aside>

      <section class="center">
        <div class="frame">
          <div class="plot">
            <svg viewBox="70 100 2250 1174" class="fill">
              <g stroke="#6f7279"><path v-for="(k, i) in candles" :key="i" :d="`M${k.x + 0.5} ${k.hi.toFixed(1)}V${k.lo.toFixed(1)}`" /></g>
              <rect v-for="(k, i) in candles" :key="i" :x="k.x - 1" :y="k.y" width="3" :height="k.hgt" :fill="k.up ? '#2c8c34' : '#dc2a20'" />
              <rect x="664" y="255" width="1530" height="107" fill="#000" stroke="#2962ff" stroke-width="2" />
              <polyline v-for="(l, i) in lines" :key="i" :points="l.p" fill="none" :stroke="l.c" :stroke-width="l.w" :stroke-dasharray="l.dash ? '10.7' : undefined" :stroke-dashoffset="l.dash ? 7.8 : undefined" />
              <polygon v-for="(a, i) in bigArrows" :key="i" :points="a.p" :fill="a.c" :stroke="a.c" stroke-width="4" stroke-linejoin="round" />
              <template v-for="(n, i) in notes" :key="i">
                <text v-for="(s, j) in n.t" :key="j" :x="n.x" :y="n.y + j * n.d" :font-size="n.s" :font-weight="n.w" :fill="n.c">{{ s }}</text>
              </template>
              <text v-for="(m, i) in marks" :key="i" :x="m[1]" :y="m[2]" :font-size="m[3]" :fill="m[4]" :font-weight="m[5]" text-anchor="middle">{{ m[0] }}</text>
              <g><circle cx="1173" cy="265" r="7" fill="#00ff33" /><path d="M1165 259l3-3M1181 259l-3-3" stroke="#00ff33" stroke-width="2" /><path d="M1173 261v5h-3" stroke="#034" fill="none" /></g>
              <g fill="none" stroke="#8e3a9d" stroke-width="2"><circle cx="1256" cy="1258" r="12" /><path d="M1258 1251l-6 8h4l-2 6 6-8h-4z" fill="#c04fd0" stroke="none" /></g>
              <path d="M83 1239h16v18h-7v-11h-9zM108 1239h11l-8 18h-8z" fill="#dcdcdc" /><circle cx="103" cy="1242" r="3.500" fill="#dcdcdc" />
            </svg>
            <div class="legend">
              <div class="lrow l1">
                <svg viewBox="0 0 22 22" width="22" height="22" aria-hidden="true"><circle cx="11" cy="11" r="11" fill="#f7931a" /><text x="11" y="16" text-anchor="middle" font-size="14" font-weight="700" fill="#fff">₿</text></svg>
                <h1>BTCUSD · Bitcoin / Dollar · 6h · Coinbase</h1>
                <i class="flag"></i><i class="live"></i>
                <p><b>O</b>86.292,69000 <b>H</b>86.849,36000 <b>L</b>86.229,93000 <b>C</b>86.457,73000 +164,61000 (+</p>
              </div>
              <div class="lrow l2">Croc 3.0 Chart - Professional No Signal No Signal No Signal No Signal No Signal off off<Icon n="hidden" :s="28" /></div>
              <div class="lrow l3"><span>Gap</span> 6.476,13000 6.556,25000</div>
              <button class="fold" aria-label="Einklappen"><svg viewBox="0 0 12 8" width="12" height="8" fill="none" stroke="#ccc" stroke-width="2"><path d="M1 6l5-4 5 4" /></svg></button>
            </div>
            <div class="float">
              <span class="grip"><Icon n="drag" :s="32" /></span>
              <button aria-label="Vorlage"><Icon n="tilesadd" :s="34" /></button>
              <button class="tcol" aria-label="Textfarbe"><Icon n="text" :s="30" /></button>
              <button class="num">20</button>
              <button aria-label="Einstellungen"><Icon n="hexa" :s="34" /></button>
              <button aria-label="Sperren"><Icon n="lock" :s="34" /></button>
              <button aria-label="Verankern"><Icon n="anchor" :s="34" /></button>
              <button aria-label="Löschen"><Icon n="trash" :s="34" /></button>
              <button aria-label="Mehr"><Icon n="more" :s="30" /></button>
            </div>
            <div class="corner">
              <button aria-label="Nach unten"><Icon n="down" :s="28" /></button>
              <button class="inv" aria-label="Maximieren"><Icon n="fit" :s="24" /></button>
            </div>
          </div>
          <div class="prices">
            <svg viewBox="2320 100 118 1174" class="fill">
              <text v-for="(t, i) in ticks" :key="i" x="2332" :y="t[1] + 5" font-size="14" fill="#a3a5ad">{{ t[0] }},00000</text>
              <g v-for="(t, i) in tags" :key="i">
                <rect x="2321" :y="t[1] - 10" :width="t[0].length > 12 ? 112 : 105" height="20" rx="2" :fill="t[2]" />
                <text x="2333" :y="t[1] + 5" font-size="14" :font-weight="t[3] === F ? 600 : 400" :fill="t[3]">{{ t[0] }}</text>
              </g>
              <rect x="2435" y="246" width="3" height="20" fill="#2962ff" />
            </svg>
            <label class="cur"><select aria-label="Währung"><option>USD</option></select><Icon n="chev" :s="26" /></label>
            <div class="al"><button>A</button><button>L</button></div>
          </div>
          <div class="times">
            <svg viewBox="70 1274 2250 32" class="fill">
              <text v-for="(d, i) in dates" :key="i" :x="d[1]" y="1297" font-size="14" text-anchor="middle" :font-weight="d[0] === '2026' ? 700 : 400" fill="#a3a5ad">{{ d[0] }}</text>
              <rect x="583" y="1274" width="162" height="29" fill="#2962ff" />
              <text x="592" y="1297" font-size="14" font-weight="600" fill="#fff">Mi 22-10-2025</text>
              <text x="735" y="1297" font-size="14" font-weight="600" fill="#fff" text-anchor="end">08:00</text>
            </svg>
          </div>
          <div class="gear"><button class="bare" aria-label="Skala"><Icon n="hexa" :s="24" /></button></div>
        </div>

        <footer class="ranges">
          <button v-for="r in ranges" :key="r" class="bare">{{ r }}</button>
          <span class="vsep"></span>
          <button class="bare" aria-label="Gehe zu"><Icon n="goto" /></button>
          <span class="grow"></span>
          <button class="bare">13:49:46 UTC+1</button>
          <span class="vsep"></span>
          <button class="shrink" aria-label="Verkleinern"><Icon n="shrink" :s="34" /></button>
          <div class="draw">
            <span class="grip"><Icon n="drag" :s="32" /></span>
            <button v-for="(d, i) in drawTools" :key="i" :class="{ blue: d === 'cross' }" :aria-label="d"><Icon :n="d" :s="34" /></button>
          </div>
        </footer>
        <div class="panel">
          <a href="#">Pine Editor</a><a href="#">Trading-Panel</a>
          <span class="grow"></span>
          <button class="bare" aria-label="Öffnen"><Icon n="up" /></button>
          <button class="bare" aria-label="Maximieren"><Icon n="fit" :s="32" /></button>
        </div>
      </section>

      <aside class="rail right">
        <button class="tool" aria-label="Watchlist"><Icon n="book" /></button>
        <button class="tool" aria-label="Alarme"><Icon n="clock" /><span class="badge wide">99+</span></button>
        <button class="tool" aria-label="Objekte"><Icon n="layers" /></button>
        <button class="tool" aria-label="Chats"><Icon n="chat" /></button>
        <span class="grow"></span>
        <button class="tool" aria-label="Screener"><Icon n="radar" /></button>
        <button class="tool" aria-label="Ideen"><Icon n="idea" /></button>
        <button class="tool" aria-label="Kalender"><Icon n="cal" /></button>
        <button class="tool" aria-label="Feed"><Icon n="feed" /></button>
        <button class="tool" aria-label="Mitteilungen"><Icon n="bell" /><span class="badge">4</span></button>
        <button class="tool round" aria-label="Produkte"><Icon n="dots9" :s="38" /></button>
        <hr />
        <button class="tool" aria-label="Hilfe"><Icon n="help" /></button>
      </aside>
    </div>
  </div>
</template>

<style>
html, body { background: #000; }
</style>

<style scoped>
.app { height: 100vh; min-width: 1200px; display: flex; flex-direction: column; background: #2e2e2e; color: #dbdbdb; font: 400 16px/20px "Open Sans", "Noto Sans", sans-serif; overflow: hidden; }
button { font: inherit; color: inherit; border: 0; padding: 0; background: none; display: inline-flex; align-items: center; justify-content: center; flex: none; }
a { color: inherit; text-decoration: none; }
svg { flex: none; display: block; }
.grow { flex: 1; }
.vsep { width: 1px; height: 27px; background: #4a4a4a; flex: none; }
.dim { color: #8c8c8c; }
.badge { position: absolute; background: #f23645; color: #fff; border-radius: 10px; font-size: 12px; font-weight: 600; line-height: 20px; min-width: 20px; text-align: center; }

.tabs { display: flex; height: 43px; background: #3d3d3d; flex: none; }
.tablist { flex: 1; display: flex; min-width: 0; }
.tab { flex: 1 1 0; min-width: 0; display: flex; align-items: center; gap: 5px; padding: 0 8px 0 14px; position: relative; overflow: hidden; }
.tab::after { content: ""; position: absolute; right: 0; top: 8px; height: 27px; width: 1px; background: #555; }
.tab.on { background: #0f0f0f; }
.tab.on::after, .tab.before::after { display: none; }
.tab.closable { gap: 4px; padding-right: 6px; }
.closable .tri { margin: 0 1px; }
.closable .tval { margin-right: -4px; }
.tname { font-weight: 700; font-size: 15px; white-space: nowrap; }
.tri { border: 6px solid transparent; border-bottom-width: 0; border-top: 11px solid #f23645; margin: 0 1px 0 3px; flex: none; }
.tri.up { border-top-width: 0; border-bottom: 11px solid #1c9a7c; }
.tval { flex: 1; min-width: 0; overflow: hidden; white-space: nowrap; color: #aaa; font-size: 15px; -webkit-mask-image: linear-gradient(90deg, #000 20%, transparent); mask-image: linear-gradient(90deg, #000 20%, transparent); }
.winbar { flex: 0 0 411px; box-sizing: border-box; display: flex; align-items: center; padding-right: 1px; }
.w46 { width: 46px; }
.w60 { width: 60px; }
.winbar .vsep { margin: 0 1px 0 8px; }

.toolbar { height: 51px; background: #0f0f0f; margin-bottom: 4px; flex: none; display: flex; align-items: center; padding: 0 6px 0 15px; font-weight: 600; }
.avatar { width: 34px; height: 34px; border-radius: 50%; background: #6f9a4e; color: #fff; font-size: 20px; position: relative; }
.avatar .badge { left: 25px; top: -8px; font-weight: 400; }
.sym { margin-left: 23px; gap: 1px; font-weight: 700; }
.plus { margin-left: 24px; margin-right: 10px; }
.intervals { display: flex; flex: 1 1 0; min-width: 0; justify-content: space-between; align-items: center; padding: 0 1px 0 9px; }
.iv { padding: 0 4px; height: 41px; border-radius: 6px; }
.iv.sel { background: #3d3d3d; }
.ivmore { margin-left: -6px; }
.w54 { width: 55px; } .w20 { width: 18px; } .w42 { width: 43px; } .w32 { width: 34px; } .w38 { width: 40px; }
.layout { margin-left: 8px; gap: 14px; }
.letters { display: flex; gap: 8px; margin: 0 15px 0 2px; }
.letters button { width: 26px; height: 26px; border: 1px solid #3d3d3d; border-radius: 50%; font-size: 12px; }
.clip { width: 22px; justify-content: flex-start; overflow: hidden; margin-left: 10px; margin-right: 5px; }
.publish { width: 148px; height: 34px; border-radius: 17px; background: #f2f2f2; color: #0f0f0f; }

.main { flex: 1; min-height: 0; display: grid; grid-template-columns: 63px minmax(0, 1fr) 55px; gap: 5px; }
.rail { background: #0f0f0f; display: flex; flex-direction: column; align-items: center; border-radius: 0 5px 0 0; }
.rail.left { padding: 9px 0 22px; }
.tool { width: 42px; height: 42px; margin: 2px 0; border-radius: 6px; position: relative; }
.tool.sel { background: #3d3d3d; }
.tool.white { background: #f2f2f2; color: #0f0f0f; }
.rail .last { margin-top: auto; margin-bottom: 0; }
.rail hr { width: 44px; border: 0; height: 1px; background: #4a4a4a; margin: 8px 0; flex: none; }
.rail.right { padding: 9px 0 8px; border-radius: 5px 0 0 0; }
.rail.right .tool { margin: 0 0 13px; }
.rail.right .tool:nth-child(-n+3) { margin-bottom: 15px; }
.tool .badge { left: 24px; top: -3px; }
.tool .badge.wide { left: 11px; width: 31px; }
.rail.right .round { background: #f2f2f2; color: #0f0f0f; border-radius: 50%; margin-bottom: 0; }
.rail.right hr { margin: 14px 0 13px; }
.rail.right .tool:last-child { margin-bottom: 0; }

.center { display: flex; flex-direction: column; min-width: 0; min-height: 0; }
.frame { flex: 1; min-height: 0; display: grid; grid-template: minmax(0, 1fr) 32px / minmax(0, 1fr) 118px; border: 2px solid #7d7d7d; border-radius: 5px 5px 0 0; background: #000; overflow: hidden; }
.plot, .prices { position: relative; min-height: 0; overflow: hidden; }
.fill { width: 100%; height: 100%; }
.prices { box-shadow: inset 1px 0 #222; }
.times { border-top: 1px solid #222; margin-top: -1px; min-height: 0; }
.gear { border-top: 1px solid #222; border-left: 1px solid #222; display: flex; align-items: center; justify-content: center; padding-left: 4px; }

.legend { position: absolute; left: 9px; top: 4px; display: flex; flex-direction: column; align-items: flex-start; }
.lrow { height: 29px; display: flex; align-items: center; white-space: nowrap; }
.l1 h1 { font-size: 19px; font-weight: 400; margin: 0 9px 0 4px; color: #bdbdbd; }
.flag { width: 15px; height: 16px; background: #f7525f; clip-path: polygon(0 0, 100% 0, 75% 50%, 100% 100%, 0 100%); margin-right: 15px; }
.live { width: 8px; height: 8px; border-radius: 50%; background: #1c9a80; border: 6px solid #0a2420; margin-right: 8px; }
.l1 p { margin: 0; color: #1b5e20; }
.l1 b { font-weight: 400; color: #bdbdbd; margin-left: 2px; }
.l2 { color: #4c4c4c; gap: 8px; font-size: 15px; }
.l3 { color: #eee; font-size: 15px; gap: 10px; }
.l3 span { color: #b5b5b5; }
.fold { width: 34px; height: 25px; border: 1px solid #333; border-radius: 4px; margin-top: 4px; }
.float, .draw { position: absolute; background: #1f1f1f; border-radius: 8px; display: flex; align-items: center; }
.float { left: 1008px; top: 11px; height: 47px; width: 400px; }
.float button, .draw button { flex: 1 1 0; min-width: 0; color: #cfcfcf; }
.grip { width: 29px; display: flex; justify-content: center; color: #666; flex: none; }
.float .num { font-weight: 600; font-size: 17px; }
.tcol { flex-direction: column; position: relative; padding-bottom: 8px; }
.tcol::after { content: ""; position: absolute; bottom: -2px; width: 26px; height: 5px; border-radius: 2px; background: #fff; }
.corner { position: absolute; right: 5px; top: 3px; display: flex; gap: 5px; }
.corner button { width: 29px; height: 30px; border: 1px solid #333; border-radius: 5px; background: #0f0f0f; }
.corner .inv { background: #f2f2f2; color: #0f0f0f; }
.cur { position: absolute; left: 5px; top: 3px; width: 110px; height: 32px; border: 1px solid #333; border-radius: 5px; background: #0f0f0f; display: flex; align-items: center; justify-content: space-between; box-sizing: border-box; }
.cur select { appearance: none; border: 0; background: none; color: #dbdbdb; font: inherit; font-size: 13px; padding: 0 0 0 4px; flex: 1; min-width: 0; }
.al { position: absolute; left: 33px; bottom: 5px; display: flex; gap: 6px; }
.al button { width: 24px; height: 26px; border: 1px solid #333; border-radius: 5px; font-size: 14px; font-weight: 600; background: #0f0f0f; box-sizing: border-box; }

.ranges { height: 47px; margin-bottom: 5px; background: #0f0f0f; flex: none; display: flex; align-items: center; padding: 0 7px 0 18px; gap: 14px; position: relative; font-weight: 600; }
.ranges .vsep { margin: 0 -2px 0 -1px; }
.shrink { width: 41px; height: 41px; background: #3d3d3d; border-radius: 6px; margin-left: -4px; }
.draw { left: 632px; top: 3px; width: 909px; height: 48px; z-index: 2; }
.draw .blue { color: #2962ff; }
.panel { height: 44px; border-bottom: 2px solid #000; background: #0f0f0f; flex: none; display: flex; align-items: center; gap: 8px; padding: 0 7px 0 19px; font-weight: 600; }
.panel a { margin-right: 30px; }
</style>
